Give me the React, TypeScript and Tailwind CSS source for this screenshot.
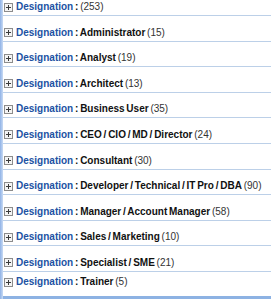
const rows: { value: string; count: number }[] = [
  { value: "Administrator", count: 15 },
  { value: "Analyst", count: 19 },
  { value: "Architect", count: 13 },
  { value: "Business User", count: 35 },
  { value: "CEO / CIO / MD / Director", count: 24 },
  { value: "Consultant", count: 30 },
  { value: "Developer / Technical / IT Pro / DBA", count: 90 },
  { value: "Manager / Account Manager", count: 58 },
  { value: "Sales / Marketing", count: 10 },
  { value: "Specialist / SME", count: 21 },
  { value: "Trainer", count: 5 },
];

const PlusBox = () => (
  <svg width="9" height="9" viewBox="0 0 9 9" className="shrink-0">
    <rect x="0.5" y="0.5" width="8" height="8" fill="#f4f4f4" stroke="#8c8c8c" />
    <path d="M2 4.5h5M4.5 2v5" stroke="#3a3a3a" strokeWidth="1" />
  </svg>
);

const Label = ({ value, count }: { value: string; count: number }) => (
  <div className="flex items-center gap-[3px] whitespace-nowrap">
    <PlusBox />
    <span className="[word-spacing:-1px]">
      <span className="font-bold text-[#2152a3]">Designation</span>
      <span className="font-bold text-[#111]"> : {value}</span>
      <span className="text-[#333]">{value ? " " : ""}({count})</span>
    </span>
  </div>
);

export default function App() {
  return (
    <div
      className="w-[271px] h-[299px] overflow-hidden flex bg-white text-[10px] leading-[12px]"
      style={{ fontFamily: '"Liberation Sans", Arial, sans-serif' }}
    >
      <div className="w-[3px] bg-gradient-to-r from-[#8fb2e6] to-[#c9dbf4]" />
      <div className="flex-1 flex flex-col">
        <div className="h-[16px] border-b border-[#bcd0e8] flex items-end pb-[2px] pl-[1px]">
          <Label value="" count={253} />
        </div>
        {rows.map((r, i) => (
          <div
            key={r.value}
            className={
              i === rows.length - 1
                ? "flex-1 flex items-end pb-[8px] pl-[1px]"
                : "h-[25.6px] border-b border-[#bcd0e8] flex items-end pb-[2px] pl-[1px]"
            }
          >
            <Label value={r.value} count={r.count} />
          </div>
        ))}
        <div className="h-[3px] bg-[#8db2e3]" />
      </div>
    </div>
  );
}
